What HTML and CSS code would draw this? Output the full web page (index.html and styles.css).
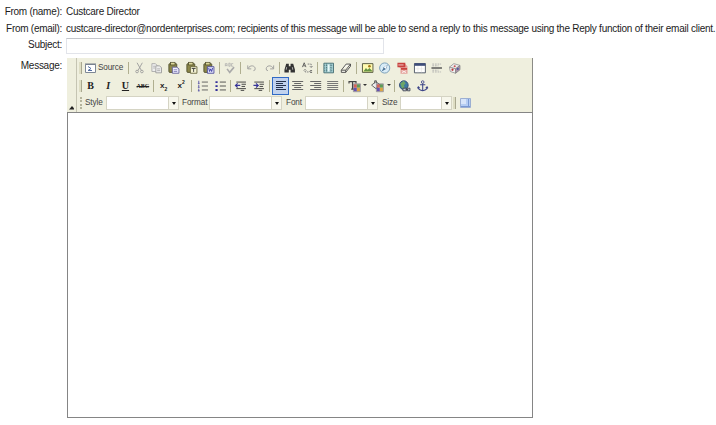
FILE: index.html
```html
<!DOCTYPE html>
<html lang="en">
<head>
<meta charset="utf-8">
<title>Send message</title>
<link rel="stylesheet" href="styles.css">
</head>
<body>
<svg class="defs" width="0" height="0">
  <defs>
    <g id="clip"><rect x="2.500" y="3" width="9" height="10" rx="1" fill="#8b8748" stroke="#4d4b2b"/><rect x="4.500" y="1.500" width="5" height="3" fill="#ddd89a" stroke="#4d4b2b" stroke-width=".8"/></g>
    <g id="palette"><rect x="7" y="6" width="3.500" height="4" fill="#d66258"/><rect x="10.500" y="6" width="3.500" height="4" fill="#5d9c58"/><rect x="7" y="10" width="3.500" height="4" fill="#6552b0"/><rect x="10.500" y="10" width="3.500" height="4" fill="#dba544"/><path d="M6.500 5.500h8v9h-8z" fill="none" stroke="#6e6878" stroke-width=".7"/></g>
  </defs>
</svg>
<form class="mail">
  <div class="label">From (name):</div><div class="value">Custcare Director</div>
  <div class="label">From (email):</div><div class="value">custcare-director@nordenterprises.com; recipients of this message will be able to send a reply to this message using the Reply function of their email client.</div>
  <div class="label subject-label">Subject:</div><div class="value"><input class="subject" type="text" aria-label="Subject"></div>
  <div class="label message">Message:</div>
  <div class="editor">
    <div class="toolbar">
      <div class="collapse"><svg width="6" height="4"><path d="M0 3.500 3 0l3 3.500z" fill="#222"/></svg></div>
      <div class="rows">
        <div class="row">
          <i class="grip"></i>
          <div class="source"><svg width="11" height="10"><path d="M.5 1.500h10v8H.5z" fill="#fff" stroke="#7d8795"/><path d="M0 1h11" stroke="#747d89"/><path d="M3 3.500l3 2-3 2M3 7.500h4" fill="none" stroke="#5571a5"/></svg><span>Source</span></div>
          <i class="sep s1"></i>
          <svg class="ic" viewBox="0 0 16 16"><path d="M5 2l5 9M11 2l-5 9" stroke="#999" fill="none"/><circle cx="5" cy="12" r="1.500" fill="none" stroke="#999"/><circle cx="10.500" cy="12" r="1.500" fill="none" stroke="#999"/></svg>
          <svg class="ic" viewBox="0 0 16 16"><path d="M2.500 3h4l2 2v7h-6z" fill="#eee" stroke="#aaa"/><path d="M7 5.500h4l2.500 2v6H7z" fill="#eee" stroke="#999"/><path d="M8.500 9h3.500m-3.500 2h3.500M4 6h2m-2 2h2" stroke="#aaa"/></svg>
          <svg class="ic" viewBox="0 0 16 16"><use href="#clip"/><path d="M6.500 7h5l2.500 2v5H6.500z" fill="#eef" stroke="#63609a"/><path d="M8 10h4m-4 2h4" stroke="#8884ba"/></svg>
          <svg class="ic" viewBox="0 0 16 16"><use href="#clip"/><path d="M6.500 6.500H14V14H6.500z" fill="#f4f3d4" stroke="#66633a"/><path d="M8 8.500h4.500M10.200 8.500v4" stroke="#333"/></svg>
          <svg class="ic" viewBox="0 0 16 16"><use href="#clip"/><path d="M6.500 6.500H14V14H6.500z" fill="#e4e6fa" stroke="#4c4a9a"/><path d="M8 8l1 4 1.200-3 1.200 3 1-4" fill="none" stroke="#3534a0"/></svg>
          <i class="sep s2"></i>
          <svg class="ic" viewBox="0 0 16 16"><path d="M3 6V3h2v3M3 5h2M7 6V2.500h1.500V6H7M12 3h-2v3h2" fill="none" stroke="#aaa" stroke-width=".8"/><path d="M5 9l3 4 5-6" fill="none" stroke="#aaa" stroke-width="1.800"/></svg>
          <i class="sep s3"></i>
          <svg class="ic" viewBox="0 0 16 16"><path d="M3.500 5v4h4M4 8.500C6 4 12 5 12 9q0 2-2 2" fill="none" stroke="#999"/></svg>
          <svg class="ic" viewBox="0 0 16 16"><path d="M12.500 5v4h-4M12 8.500C10 4 4 5 4 9q0 2 2 2" fill="none" stroke="#999"/></svg>
          <i class="sep s2"></i>
          <svg class="ic" viewBox="0 0 16 16"><path d="M4 3h3v3h2V3h3l2 7v3H9v-3H7v3H2v-3z" fill="#333"/><path d="M4.500 7L4 10M11 7l.5 3" stroke="#bbb"/></svg>
          <svg class="ic" viewBox="0 0 16 16"><path d="M2 7l2-5 2 5M3 5.500h2M13 11h-2q-1 1 0 2h2" fill="none" stroke="#555"/><path d="M8 3.500h4v4M10.500 6L12 7.500 13.500 6M9 12.500H5v-3M3.500 11L5 9.500 6.500 11" fill="none" stroke="#777" stroke-dasharray="2 1"/></svg>
          <i class="sep s2"></i>
          <svg class="ic" viewBox="0 0 16 16"><path d="M2.500 2.500h11v11h-11z" fill="#a7d1d4" stroke="#426a70"/><path d="M5.500 3v10m5-10v10M3 8h10M3 5h10M3 11h10" stroke="#487178" stroke-dasharray="1 1"/><path d="M7 4h2v8H7z" fill="#eafafa"/></svg>
          <svg class="ic" viewBox="0 0 16 16"><path d="M3 10.500l5.500-7h5l-5.500 7zM3 10.500V13h5l5.500-7V3.500M8 10.500V13" fill="#f8f8f0" stroke="#444"/></svg>
          <i class="sep s4"></i>
          <svg class="ic" viewBox="0 0 16 16"><path d="M2 3h12v10H2z" fill="#fffbb0" stroke="#494d35"/><path d="M3 12l3-4 2 2 2-2 3 3v1z" fill="#669443"/><circle cx="10" cy="6" r="1.500" fill="#a57818"/></svg>
          <svg class="ic" viewBox="0 0 16 16"><circle cx="8" cy="8" r="5.800" fill="#d9ecf7" stroke="#6e96b4"/><path d="M11.500 4L9.500 9l-5 3L7 7z" fill="#4a7195"/><path d="M11 4.500L7 7l2 2" fill="#fff"/></svg>
          <svg class="ic" viewBox="0 0 16 16"><path d="M4.500 3h6l3 3v8.500h-8V8h-1z" fill="#e5a19b"/><path d="M2 2h9v5H2zM6 8h7v2H6z" fill="#c8413d"/><path d="M3 4.500h6M7 11l5 2.500m0-2.500-5 2.500" stroke="#fff" stroke-width=".8"/></svg>
          <svg class="ic" viewBox="0 0 16 16"><path d="M2 3h12.500v10.500H2z" fill="#fff" stroke="#444d5c"/><path d="M2 2.500h12.500v3H2z" fill="#3e4d79"/><path d="M6 6v7m4-7v7M3 9h11" stroke="#e2e2df" stroke-width=".6"/></svg>
          <svg class="ic" viewBox="0 0 16 16"><path d="M3 3.500h10m-10 9h10M3 5.500h7m-7 5h7" stroke="#aaa" stroke-dasharray="2 1"/><path d="M2 8h12" stroke="#444" stroke-width="1.500"/></svg>
          <svg class="ic" viewBox="0 0 16 16"><path d="M2 7l5-4 7 2-5 4z" fill="#eee" stroke="#999"/><path d="M2 7l7 2v5l-6-2z" fill="#f3f3f3" stroke="#999"/><path d="M9 9l5-4v5l-5 4z" fill="#ac92a9" stroke="#888"/><circle cx="5.500" cy="10" r="1.300" fill="#ba393a"/><circle cx="8" cy="6" r="1.200" fill="#c65353"/><circle cx="11.500" cy="9" r="1.200" fill="#5257a0"/></svg>
        </div>
        <div class="row second">
          <i class="grip"></i>
          <span class="ic letter"><b>B</b></span><span class="ic letter"><b><em>I</em></b></span><span class="ic letter"><b><u>U</u></b></span><span class="ic letter strike"><b>ABC</b></span>
          <i class="sep s2"></i>
          <span class="ic script"><b>x<sub>2</sub></b></span><span class="ic script"><b>x<sup>2</sup></b></span>
          <i class="sep s4"></i>
          <svg class="ic" viewBox="0 0 16 16"><path d="M3.500 2v3M3.500 6.500v3M3.500 11v3M2.500 5h2m-2 4.500h2m-2 4h2" stroke="#5550a5"/><path d="M7 3.500h7m-7 4.500h7m-7 4.500h7" stroke="#555"/></svg>
          <svg class="ic" viewBox="0 0 16 16"><path d="M2 2.500h2.500v2.200H2zm0 4.500h2.500v2.200H2zm0 4.500h2.500v2.200H2z" fill="#34309a"/><path d="M7 3.500h7M7 8h7m-7 4.500h7" stroke="#444"/></svg>
          <i class="sep s2"></i>
          <svg class="ic" viewBox="0 0 16 16"><path d="M3 3.500h11M9 6h5M9 8.500h4M3 11h11M8 13h4" stroke="#333"/><path d="M7.500 7.300H2M4.500 5L2 7.300l2.500 2.400" fill="none" stroke="#37359a" stroke-width="1.300"/></svg>
          <svg class="ic" viewBox="0 0 16 16"><path d="M3 3.500h11M9 6h5M9 8.500h4M3 11h11M8 13h4" stroke="#333"/><path d="M2 7.300h5M5 5l2.500 2.300L5 9.700" fill="none" stroke="#37359a" stroke-width="1.300"/></svg>
          <i class="sep s5"></i>
          <span class="ic active"><svg width="16" height="14"><path d="M3 2.500h10M3 4.500h7M3 6.500h10M3 8.500h7M3 10.500h10" stroke="#27334c"/></svg></span>
          <svg class="ic" viewBox="0 0 17 14"><path d="M3 2.500h11M5 4.500h7M3 6.500h11M5 8.500h7M3 10.500h11" stroke="#666"/></svg>
          <svg class="ic" viewBox="0 0 17 14"><path d="M3 2.500h11M7 4.500h7M3 6.500h11M7 8.500h7M3 10.500h11" stroke="#666"/></svg>
          <svg class="ic" viewBox="0 0 17 14"><path d="M3 2.500h11M3 4.500h11M3 6.500h11M3 8.500h11M3 10.500h11" stroke="#777"/></svg>
          <i class="sep s4"></i>
          <svg class="ic" viewBox="0 0 16 16"><path d="M1.500 5V3h8v2M5.500 3v8M4 11.500h3" fill="none" stroke="#444" stroke-width="1.300"/><use href="#palette"/></svg><i class="arrow"></i>
          <svg class="ic" viewBox="0 0 16 16"><path d="M1 7l5-4 5 4-5 4zM4.500 5V2h2v3" fill="#eee" stroke="#555"/><use href="#palette"/></svg><i class="arrow"></i>
          <i class="sep s2"></i>
          <svg class="ic" viewBox="0 0 16 16"><circle cx="7" cy="7" r="5" fill="#3e79a2" stroke="#354c75"/><path d="M3 5l4-3 2 3-2 2 1 3-3 1-1-3z" fill="#6da568"/><path d="M6 10.500h4v3H6zm5 0h3v3h-3zM9 12h3" fill="#c4c9d7" stroke="#3f4350"/></svg>
          <svg class="ic" viewBox="0 0 16 16"><circle cx="8" cy="3.500" r="1.500" fill="none" stroke="#3d4588"/><path d="M8 5v8M5 6.500h6M3 9v2q2 2 5 2.500 3-.5 5-2.500V9M2 10.500L3 9l1.500 1.500M11.500 10.500L13 9l1 1.500" fill="none" stroke="#3d4588" stroke-width="1.200"/></svg>
        </div>
        <div class="row third">
          <i class="grip dotted"></i>
          <span class="field style">Style</span><span class="combo"><i></i></span>
          <span class="field format">Format</span><span class="combo"><i></i></span>
          <span class="field font">Font</span><span class="combo"><i></i></span>
          <span class="field size">Size</span><span class="combo small"><i></i></span>
          <i class="grip end"></i>
          <svg class="blocks" width="11" height="10"><path d="M.5.5h10v9H.5z" fill="#b5cdf3" stroke="#9cafd2"/><path d="M1 1h5v5H1z" fill="#d8e5fa"/><path d="M8.500 1v8M1 8.500h9" stroke="#7998d2"/></svg>
        </div>
      </div>
    </div>
    <div class="canvas"></div>
  </div>
</form>
</body>
</html>
```
FILE: styles.css
```css
* { box-sizing: border-box; }
body { margin: 0; background: #fff; color: #1c1c1c; overflow: hidden; font: 10px/12px "Liberation Sans", Arial, sans-serif; }
.defs { display: block; height: 0; }
.mail { display: grid; grid-template-columns: 62px 650px; column-gap: 4px; grid-template-rows: 17px 15px 20px 360px; padding-top: 6px; }
.label { text-align: right; white-space: nowrap; letter-spacing: -.27px; }
.value { white-space: nowrap; letter-spacing: -.25px; }
.subject-label { padding-top: 1px; }
.subject { display: block; width: 318px; height: 16px; margin: 0; padding: 0 2px; border: 1px solid #e2e4ea; border-top-color: #c4c6cb; outline: 0; font: inherit; }
.message { padding-top: 2px; }
.editor { width: 467px; height: 360px; padding-left: 1px; }
.toolbar { display: flex; width: 466px; height: 54px; background: #efefde; }
.collapse { display: flex; align-items: flex-end; width: 10px; padding: 0 2px 2px; border-right: 1px solid #c5c4b2; }
.rows { flex: 1; min-width: 0; padding-top: 1px; border-right: 1px solid #8b8b86; }
.row { display: flex; align-items: center; height: 18px; padding-left: 2px; }
.second { height: 17px; }
.third { height: 18px; }
.grip { flex: none; width: 3px; height: 12px; background: #deddc4; border-right: 1px solid #a9a890; }
.dotted { background: none; border-right: 2px dotted #b5b49c; }
.source { display: flex; align-items: center; gap: 2px; width: 43px; margin-left: 3px; margin-right: 1px; color: #444; font-size: 8.2px; letter-spacing: -.15px; white-space: nowrap; }
.sep { flex: none; height: 12px; }
.sep::before { content: ""; display: block; width: 1px; height: 12px; margin: 0 auto; background: #b0af90; }
.s1 { width: 1.5px; }
.s1::before { transform: translateX(-1px); }
.s2 { width: 3.4px; }
.s3 { width: 5px; }
.s4 { width: 4.4px; }
.s5 { width: 5px; }
.ic { display: block; flex: none; width: 17.4px; height: 14px; }
.letter, .script { color: #222; text-align: center; font: 10px/14px "Liberation Serif", serif; letter-spacing: 0; }
.strike { font-size: 6px; text-decoration: line-through; }
.script { font: 8px/13px "Liberation Sans", sans-serif; }
.script sub, .script sup { font-size: 5px; line-height: 0; }
.active { display: flex; align-items: center; justify-content: center; height: 18px; border: 1px solid #316ac5; background: #c1d2ee; }
.active svg { flex: none; }
.arrow { flex: none; width: 6px; height: 3px; }
.arrow::before { content: ""; display: block; width: 0; border: 2px solid transparent; border-top-color: #333; border-bottom: 0; }
.field { flex: none; color: #444; font-size: 8.2px; letter-spacing: -.1px; white-space: nowrap; }
.style { width: 24px; padding-left: 3px; }
.format { width: 30px; padding-left: 3px; }
.font { width: 23px; padding-left: 4px; }
.size { width: 22px; padding-left: 4px; }
.combo { display: flex; flex: none; justify-content: flex-end; width: 73px; height: 14px; background: #fff; border: 1px solid #d5d4c4; }
.combo i { display: flex; align-items: center; justify-content: center; width: 10px; border-left: 1px solid #d5d4c4; background: #f7f7ec; }
.combo i::before { content: ""; border: 2px solid transparent; border-top: 3px solid #111; border-bottom: 0; }
.small { width: 52px; }
.end { margin-left: 1px; }
.blocks { flex: none; margin-left: 4px; }
.canvas { width: 466px; height: 306px; border: 1px solid #858585; background: #fff; }
```
